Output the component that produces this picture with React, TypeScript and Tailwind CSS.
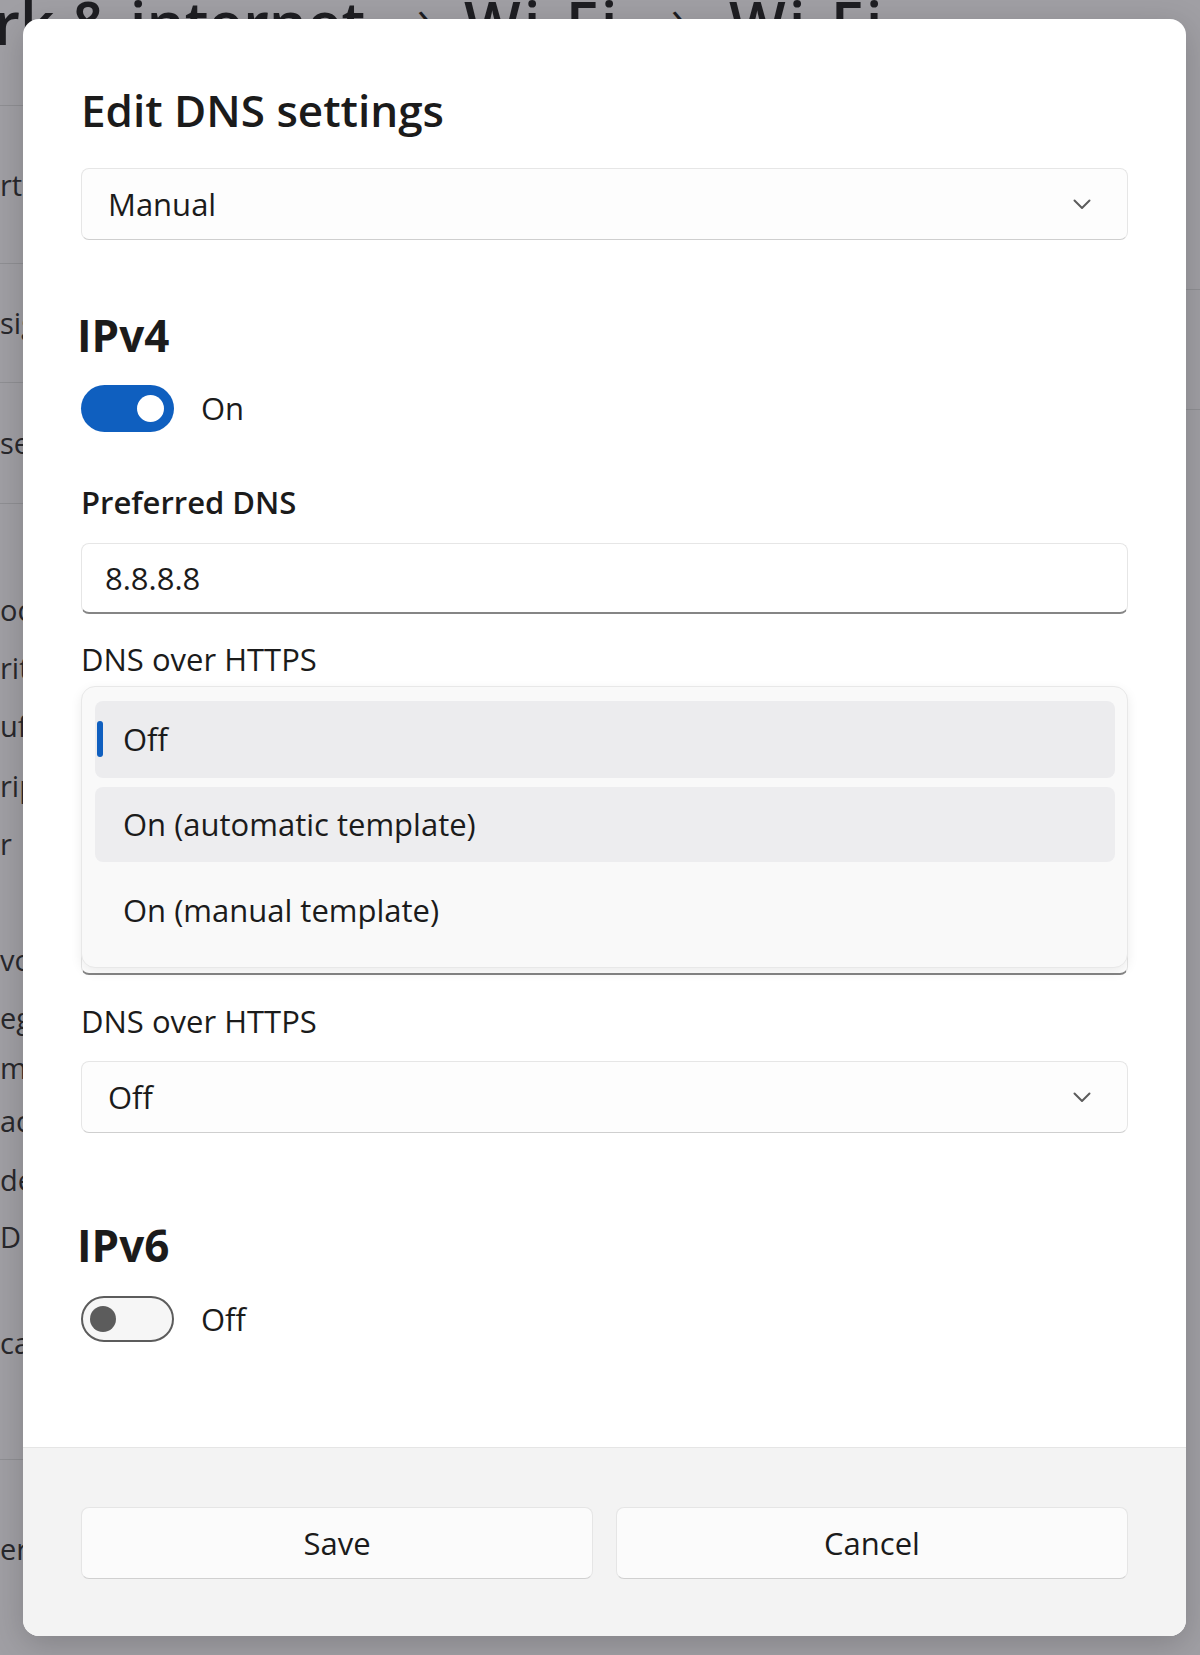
import React from "react";

const font = { fontFamily: '"Open Sans", "Noto Sans", "Liberation Sans", sans-serif' };

function Chevron() {
  return (
    <svg width="18" height="11" viewBox="0 0 18 11" fill="none">
      <path d="M1.5 1.5 L9 9 L16.5 1.5" stroke="#5c5c5c" strokeWidth="2" strokeLinecap="round" strokeLinejoin="round" />
    </svg>
  );
}

function Select({ value }: { value: string }) {
  return (
    <div className="flex h-[72px] items-center justify-between rounded-[8px] border border-[#e6e6e6] border-b-[#cfcfcf] bg-[#fdfdfd] pl-[26px] pr-[36px]">
      <span className="text-[31px] text-[#1b1b1b]">{value}</span>
      <Chevron />
    </div>
  );
}

function Toggle({ on, label }: { on: boolean; label: string }) {
  return (
    <div className="flex items-center gap-[27px]">
      {on ? (
        <div className="flex h-[47px] w-[93px] items-center justify-end rounded-full bg-[#0f5fbf] pr-[10px]">
          <div className="h-[27px] w-[27px] rounded-full bg-white" />
        </div>
      ) : (
        <div className="flex h-[46px] w-[93px] items-center rounded-full border-2 border-[#5c5c5c] bg-[#f6f6f6] pl-[7px]">
          <div className="h-[26px] w-[26px] rounded-full bg-[#5c5c5c]" />
        </div>
      )}
      <span className="text-[31px] text-[#1b1b1b]">{label}</span>
    </div>
  );
}

const sideItems: { text: string; h: number; line?: boolean }[] = [
  { text: "", h: 106, line: true },
  { text: "rti", h: 158, line: true },
  { text: "sig", h: 119, line: true },
  { text: "se", h: 121, line: true },
  { text: "", h: 76 },
  { text: "oc", h: 60 },
  { text: "rit", h: 55 },
  { text: "ufa", h: 61 },
  { text: "rip", h: 60 },
  { text: "r", h: 56 },
  { text: "", h: 58 },
  { text: "vo", h: 60 },
  { text: "eg", h: 56 },
  { text: "m", h: 44 },
  { text: "ac", h: 62 },
  { text: "de", h: 56 },
  { text: "DI", h: 58 },
  { text: "", h: 48 },
  { text: "ca", h: 58 },
  { text: "", h: 88, line: true },
  { text: "", h: 59 },
  { text: "er", h: 60 },
];

export default function App() {
  return (
    <div className="relative h-[1655px] w-[1200px] overflow-hidden bg-[#a09fa4]" style={font}>
      {/* dimmed background window */}
      <div className="ml-[-6px] mt-[-8px] flex items-start text-[60px] font-semibold leading-none text-[#1e1e22]">
        <span className="w-[423px] shrink-0">rk &amp; internet</span>
        <span className="w-[47px] shrink-0 text-[46px] font-normal">›</span>
        <span className="w-[207px] shrink-0 tracking-[3px]">Wi-Fi</span>
        <span className="w-[58px] shrink-0 text-[46px] font-normal">›</span>
        <span className="shrink-0 tracking-[3px]">Wi-Fi</span>
      </div>
      <div className="absolute left-0 top-0 flex w-[60px] flex-col text-[29px] text-[#28282c]">
        {sideItems.map((it, i) => (
          <div
            key={i}
            className={"flex items-center " + (it.line ? "border-b border-[#8f8f93]" : "")}
            style={{ height: it.h }}
          >
            {it.text}
          </div>
        ))}
      </div>
      <div className="absolute right-0 top-[100px] flex w-[20px] flex-col">
        <div className="h-[190px] border-b border-[#8f8f93]" />
        <div className="h-[120px] border-b border-[#8f8f93]" />
      </div>

      {/* dialog */}
      <div className="absolute left-[23px] top-[19px] flex h-[1617px] w-[1163px] flex-col overflow-hidden rounded-[16px] bg-white text-[#1b1b1b] shadow-[0_8px_32px_rgba(0,0,0,0.18)]">
        <div className="flex flex-1 flex-col px-[58px] pt-[63px]">
          <h1 className="text-[44px] font-semibold leading-[56px]">Edit DNS settings</h1>
          <div className="mt-[30px]">
            <Select value="Manual" />
          </div>

          <h2 className="ml-[-4px] mt-[67px] text-[44px] font-bold leading-[56px]">IPv4</h2>
          <div className="mt-[22px]">
            <Toggle on label="On" />
          </div>

          <div className="mt-[50px] text-[31px] font-semibold leading-[40px]">Preferred DNS</div>
          <div className="mt-[21px] flex h-[71px] items-center rounded-[8px] border border-[#e6e6e6] border-b-2 border-b-[#858585] bg-white pl-[23px] text-[31px]">
            8.8.8.8
          </div>

          <div className="mt-[25px] text-[31px] leading-[40px]">DNS over HTTPS</div>
          <div className="relative mt-[7px] h-[289px]">
            <div className="absolute inset-x-0 bottom-0 h-[70px] rounded-[8px] border border-[#e6e6e6] border-b-2 border-b-[#858585] bg-white" />
            <div className="absolute inset-x-0 top-0 z-10 flex h-[282px] flex-col gap-[9px] rounded-[14px] border border-[#e8e8e8] bg-[#f9f9f9] pl-[13px] pr-[12px] pt-[14px] shadow-[0_4px_12px_rgba(0,0,0,0.08)]">
              <div className="relative flex h-[77px] items-center rounded-[8px] bg-[#ececee] pl-[28px] text-[31px]">
                <div className="absolute left-[2px] top-[20px] h-[36px] w-[6px] rounded-full bg-[#0f5fbf]" />
                Off
              </div>
              <div className="flex h-[75px] items-center rounded-[8px] bg-[#ededef] pl-[28px] text-[31px]">
                On (automatic template)
              </div>
              <div className="flex h-[78px] items-center rounded-[8px] pl-[28px] text-[31px]">
                On (manual template)
              </div>
            </div>
          </div>

          <div className="mt-[26px] text-[31px] leading-[40px]">DNS over HTTPS</div>
          <div className="mt-[20px]">
            <Select value="Off" />
          </div>

          <h2 className="ml-[-4px] mt-[84px] text-[44px] font-bold leading-[56px]">IPv6</h2>
          <div className="mt-[23px]">
            <Toggle on={false} label="Off" />
          </div>
        </div>

        <div className="flex h-[189px] gap-[23px] border-t border-[#e5e5e5] bg-[#f3f3f3] px-[58px] pt-[59px]">
          <div className="flex h-[72px] flex-1 items-center justify-center rounded-[8px] border border-[#e5e5e5] border-b-[#d0d0d0] bg-[#fbfbfb] text-[31px]">
            Save
          </div>
          <div className="flex h-[72px] flex-1 items-center justify-center rounded-[8px] border border-[#e5e5e5] border-b-[#d0d0d0] bg-[#fbfbfb] text-[31px]">
            Cancel
          </div>
        </div>
      </div>
    </div>
  );
}
